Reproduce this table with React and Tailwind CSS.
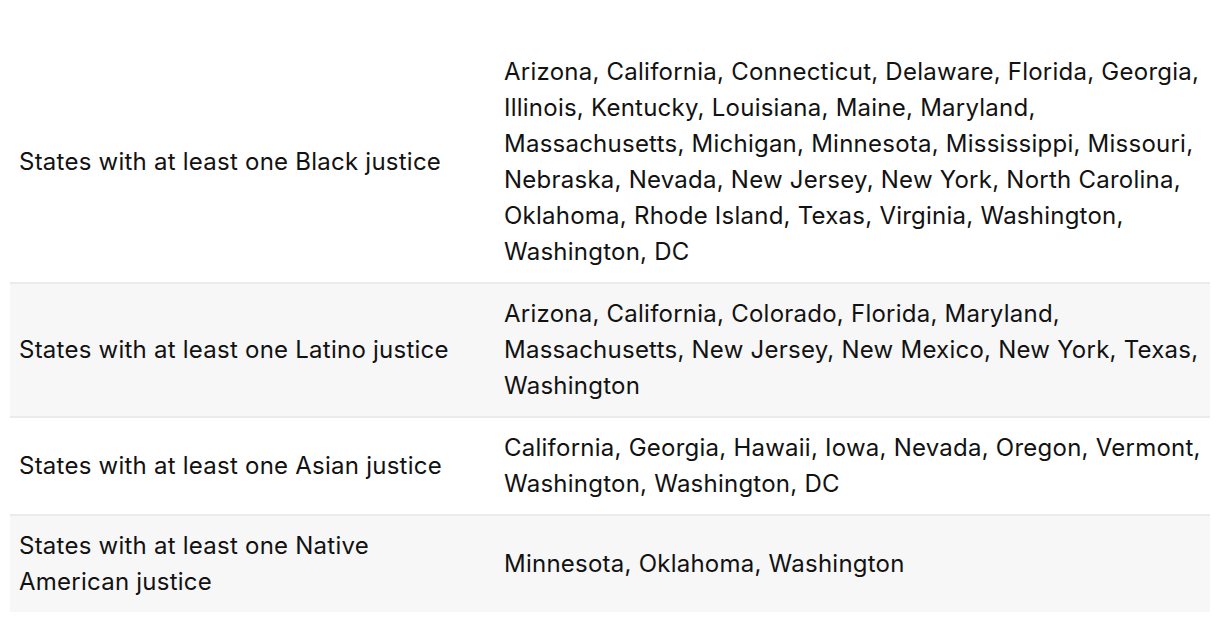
import React from 'react';

const rows = [
  {
    label: 'States with at least one Black justice',
    states:
      'Arizona, California, Connecticut, Delaware, Florida, Georgia, Illinois, Kentucky, Louisiana, Maine, Maryland, Massachusetts, Michigan, Minnesota, Mississippi, Missouri, Nebraska, Nevada, New Jersey, New York, North Carolina, Oklahoma, Rhode Island, Texas, Virginia, Washington, Washington, DC',
  },
  {
    label: 'States with at least one Latino justice',
    states:
      'Arizona, California, Colorado, Florida, Maryland, Massachusetts, New Jersey, New Mexico, New York, Texas, Washington',
  },
  {
    label: 'States with at least one Asian justice',
    states: 'California, Georgia, Hawaii, Iowa, Nevada, Oregon, Vermont, Washington, Washington, DC',
  },
  {
    label: 'States with at least one Native American justice',
    states: 'Minnesota, Oklahoma, Washington',
  },
];

export default function App() {
  return (
    <div className="min-h-[622px] bg-white px-[10px] pt-[42px] font-['Inter','Liberation_Sans',sans-serif] text-[24px] leading-[36px] tracking-[0.01em] text-[#121212]">
      <div className="flex flex-col">
        {rows.map((row, i) => (
          <div
            key={row.label}
            className={
              'grid grid-cols-[485px_1fr] items-center py-3 ' +
              (i % 2 === 1 ? 'bg-[#f7f7f7] ' : 'bg-white ') +
              (i < rows.length - 1 ? 'border-b-2 border-[#ebebeb]' : '')
            }
          >
            <div className="px-[9px]">{row.label}</div>
            <div className="pl-[9px] pr-[4px]">{row.states}</div>
          </div>
        ))}
      </div>
    </div>
  );
}
